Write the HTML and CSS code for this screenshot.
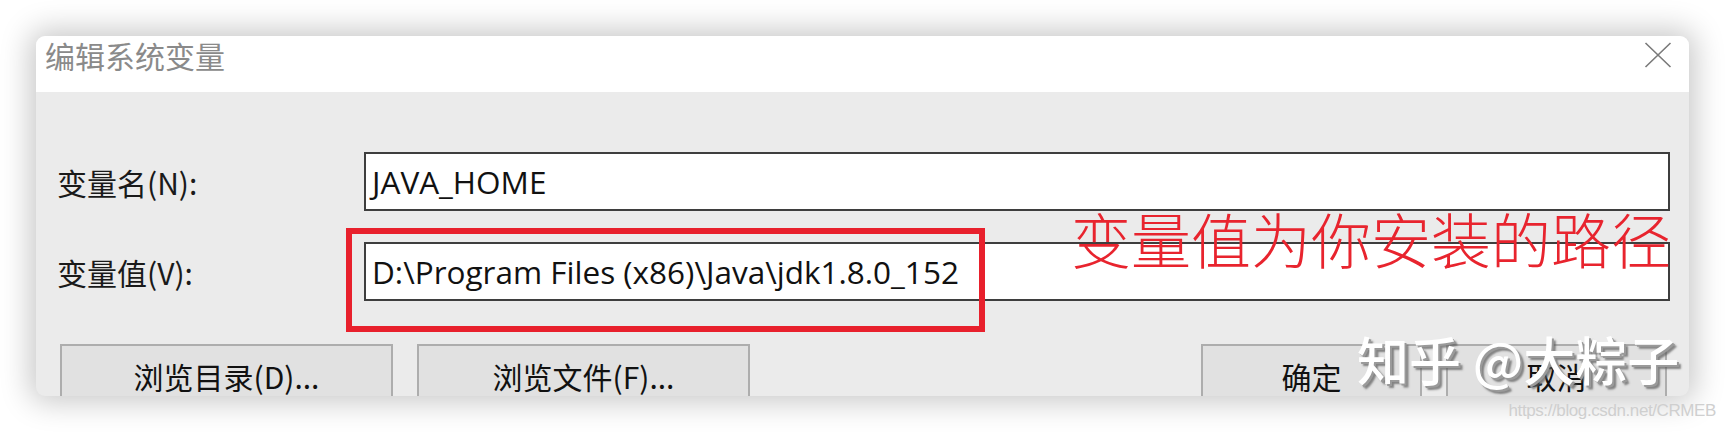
FILE: index.html
```html
<!DOCTYPE html>
<html lang="zh-CN">
<head>
<meta charset="utf-8">
<title>编辑系统变量</title>
<link rel="stylesheet" href="styles.css">
</head>
<body>
<div class="stage">
  <div class="window">
    <div class="titlebar">
      <span class="title">编辑系统变量</span>
      <svg class="close" width="28" height="26" viewBox="0 0 28 26" aria-hidden="true">
        <path d="M1.5 1 L26.5 25 M26.5 1 L1.5 25" stroke="#7a7a7a" stroke-width="1.6" fill="none"/>
      </svg>
    </div>
    <div class="body">
      <div class="form">
        <label class="label">变量名(N):</label>
        <div class="input">JAVA_HOME</div>
        <label class="label">变量值(V):</label>
        <div class="input">D:\Program Files (x86)\Java\jdk1.8.0_152</div>
      </div>
      <div class="buttons">
        <div class="btn btn-wide">浏览目录(D)...</div>
        <div class="btn btn-wide">浏览文件(F)...</div>
        <div class="spacer"></div>
        <div class="btn btn-small">确定</div>
        <div class="btn btn-small">取消</div>
      </div>
    </div>
  </div>
  <div class="highlight"></div>
  <div class="note">变量值为你安装的路径</div>
  <div class="watermark">知乎 @大粽子</div>
  <div class="source">https://blog.csdn.net/CRMEB</div>
</div>
</body>
</html>
```
FILE: styles.css
```css
html, body {
  margin: 0;
  padding: 0;
  background: #ffffff;
}
body {
  width: 1726px;
  height: 432px;
  overflow: hidden;
  font-family: "Noto Sans CJK SC", "Noto Sans", sans-serif;
}
.stage {
  position: relative;
  width: 1726px;
  height: 432px;
  padding: 36px 0 0 36px;
  box-sizing: border-box;
}
.window {
  width: 1653px;
  height: 360px;
  border-radius: 9px;
  overflow: hidden;
  background: #ebebeb;
  box-shadow: 0 0 30px 6px rgba(0, 0, 0, 0.22);
  display: flex;
  flex-direction: column;
}
.titlebar {
  height: 56px;
  flex: none;
  background: #ffffff;
  display: flex;
  align-items: flex-start;
  justify-content: space-between;
  padding: 0 17px 0 9px;
}
.title {
  font-size: 30px;
  line-height: 44px;
  margin-top: -3px;
  color: #8a8a8a;
}
.close {
  margin-top: 6px;
}
.body {
  flex: 1;
  padding: 60px 22px 0 21px;
  display: flex;
  flex-direction: column;
}
.form {
  display: grid;
  grid-template-columns: 307px 1306px;
  grid-auto-rows: 59px;
  row-gap: 31px;
  align-items: center;
}
.label {
  font-size: 30px;
  color: #1a1a1a;
  font-family: "Noto Sans CJK SC", sans-serif;
}
.input {
  height: 100%;
  box-sizing: border-box;
  border: 2px solid #3e3e3e;
  background: #ffffff;
  padding: 0 6px;
  display: flex;
  align-items: center;
  font-family: "Open Sans", "Noto Sans", sans-serif;
  font-size: 31.5px;
  color: #111111;
  white-space: nowrap;
}
.buttons {
  margin-top: 43px;
  margin-left: 3px;
  display: flex;
  gap: 24px;
}
.spacer {
  flex: 1;
}
.btn {
  height: 64px;
  box-sizing: border-box;
  border: 2px solid #adadad;
  background: #e1e1e1;
  display: flex;
  align-items: center;
  justify-content: center;
  font-size: 30px;
  line-height: 40px;
  color: #111111;
}
.btn-wide {
  width: 333px;
}
.btn-small {
  width: 221px;
}
.highlight {
  position: absolute;
  left: 346px;
  top: 228px;
  width: 639px;
  height: 104px;
  box-sizing: border-box;
  border: 6px solid #e8202c;
}
.note {
  position: absolute;
  left: 1071px;
  top: 196px;
  font-size: 60px;
  line-height: 84px;
  color: #e8242e;
  white-space: nowrap;
  font-weight: 300;
}
.watermark {
  position: absolute;
  left: 1357px;
  top: 324px;
  font-size: 52px;
  line-height: 70px;
  font-weight: 500;
  color: #ffffff;
  white-space: nowrap;
  text-shadow: 2px 2px 0 #9a9a9a, 4px 4px 2px rgba(90, 90, 90, 0.7);
}
.source {
  position: absolute;
  right: 10px;
  top: 401px;
  font-family: "Liberation Sans", Arial, sans-serif;
  font-size: 17px;
  letter-spacing: -0.4px;
  color: #cfcfcf;
  white-space: nowrap;
}
```
